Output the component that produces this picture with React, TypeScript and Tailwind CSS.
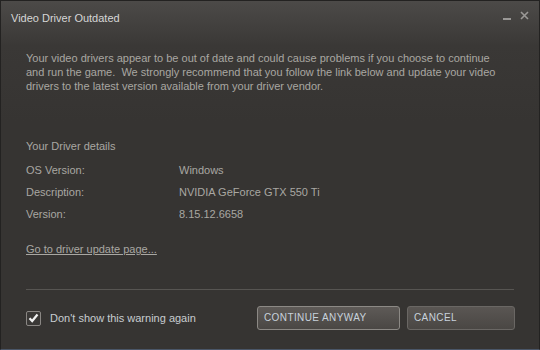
import React from "react";

export default function App() {
  const font = { fontFamily: '"Liberation Sans", Arial, sans-serif' };
  return (
    <div className="w-[540px] h-[350px] overflow-hidden bg-[#2b2a29]" style={font}>
      <div className="w-full h-full border border-[#232221] border-b-[#4a5668] bg-[linear-gradient(to_bottom,#4c4a48_0px,#3a3836_45px,#363432_120px)] flex flex-col">
        <div className="flex items-start justify-between h-[38px] pl-[10px] pr-[10px]">
          <div className="pt-[9px] text-[11px] text-[#d6d6d6]">Video Driver Outdated</div>
          <div className="flex items-start gap-[9px] pt-[10px]">
            <div className="w-[8px] h-[2px] bg-[#9a9896] mt-[7px]" />
            <svg width="9" height="9" viewBox="0 0 9 9">
              <path d="M1 1 L8 8 M8 1 L1 8" stroke="#9a9896" strokeWidth="1.6" />
            </svg>
          </div>
        </div>
        <div className="pl-[25px] pr-[24px] text-[11px] leading-[14px] text-[#a9a7a2]">
          <p className="mt-[12px]">
            Your video drivers appear to be out of date and could cause problems if you choose to continue
            <br />
            and run the game.&nbsp; We strongly recommend that you follow the link below and update your video
            <br />
            drivers to the latest version available from your driver vendor.
          </p>
          <div className="mt-[46px]">Your Driver details</div>
          <div className="mt-[10px] flex flex-col gap-[8px]">
            <div className="flex"><span className="w-[153px]">OS Version:</span><span>Windows</span></div>
            <div className="flex"><span className="w-[153px]">Description:</span><span>NVIDIA GeForce GTX 550 Ti</span></div>
            <div className="flex"><span className="w-[153px]">Version:</span><span>8.15.12.6658</span></div>
          </div>
          <div className="mt-[21px] underline">Go to driver update page...</div>
          <div className="mt-[33px] h-px bg-[#575552] mr-[1px]" />
          <div className="mt-[16px] flex items-center">
            <div className="w-[15px] h-[15px] border border-[#8a8784] rounded-[2px] bg-[#3a3836] flex items-center justify-center">
              <svg width="11" height="10" viewBox="0 0 11 10">
                <path d="M1.5 5.2 L4.2 8 L9.5 1.5" stroke="#f2f2f2" strokeWidth="2.2" fill="none" />
              </svg>
            </div>
            <span className="ml-[9px] text-[#c8ccd0]">Don't show this warning again</span>
            <div className="ml-auto flex gap-[7px]">
              <button className="w-[143px] h-[24px] rounded-[3px] border border-[#8c8985] bg-[linear-gradient(to_bottom,#5e5a57,#4a4744)] text-left pl-[6px] text-[10px] tracking-[0.4px] text-[#c8d2dc]">CONTINUE ANYWAY</button>
              <button className="w-[108px] h-[24px] rounded-[3px] border border-[#6a6764] bg-[linear-gradient(to_bottom,#5a5653,#4a4744)] text-left pl-[6px] text-[10px] tracking-[0.4px] text-[#c8d2dc]">CANCEL</button>
            </div>
          </div>
        </div>
      </div>
    </div>
  );
}
